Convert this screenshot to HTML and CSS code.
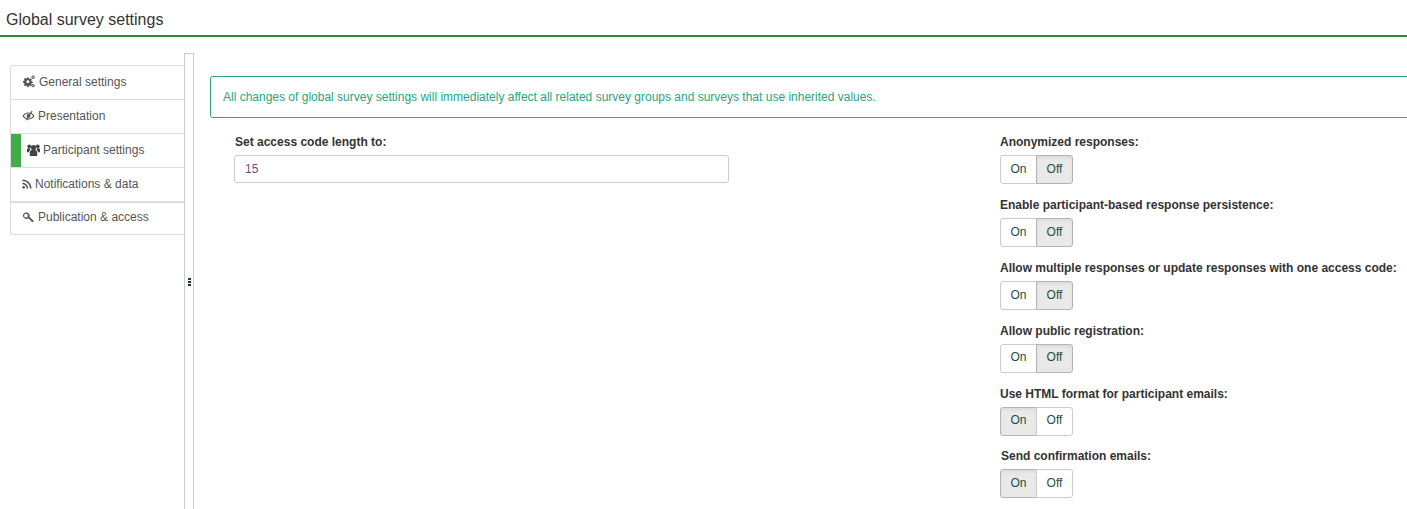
FILE: index.html
```html
<html>

<head>
    <title>Global survey settings</title>
    <link rel="stylesheet" href="styles.css">
</head>

<body>
    <div class="top-bar">Global survey settings</div>

    <div class="page">
        <div class="side-menu">
            <a class="menu-item first">
                <svg class="icon gears" viewBox="0 0 14 14"><path d="M5 2.600h1.600l.3 1.200.9.4 1.100-.6 1.100 1.100-.6 1.100.4.9 1.200.3v1.600l-1.200.3-.4.9.6 1.100-1.100 1.100-1.100-.6-.9.4-.3 1.200H5l-.3-1.200-.9-.4-1.100.6-1.100-1.100.6-1.100-.4-.9L.6 8.100V6.500l1.200-.3.4-.9-.6-1.100 1.100-1.100 1.100.6.9-.4zM5.800 5.700a1.600 1.600 0 1 0 0 3.200 1.600 1.600 0 0 0 0-3.200z" fill-rule="evenodd"/><path d="M11.400.6a1.800 1.800 0 1 0 0 3.600 1.800 1.800 0 0 0 0-3.600zm0 1.100a.7.7 0 1 1 0 1.400.7.7 0 0 1 0-1.400zM11.400 9.600a1.800 1.800 0 1 0 0 3.600 1.800 1.800 0 0 0 0-3.600zm0 1.100a.7.7 0 1 1 0 1.400.7.7 0 0 1 0-1.400z" fill-rule="evenodd"/></svg>
                General settings
            </a>
            <a class="menu-item">
                <svg class="icon" viewBox="0 0 14 14"><path d="M.5 7.500C2 5 4.300 3.800 7 3.800s5 1.200 6.500 3.700C12 10 9.700 11.200 7 11.200S2 10 .5 7.500zm1.500 0c1.200 1.700 3 2.600 5 2.600s3.800-.9 5-2.600c-1.200-1.700-3-2.600-5-2.600s-3.800.9-5 2.600z" fill-rule="evenodd"/><circle cx="7" cy="7.500" r="2"/><path d="M10.300 1.800l1.100.7-6 10-1.100-.7z"/></svg>
                Presentation
            </a>
            <a class="menu-item active">
                <svg class="icon users" viewBox="0 0 13 12"><circle cx="6.500" cy="3.600" r="2.600"/><circle cx="2.300" cy="2.300" r="1.900"/><circle cx="10.700" cy="2.300" r="1.900"/><path d="M2.800 12V8.400c0-1.500.9-2.500 2.200-2.500h3c1.300 0 2.200 1 2.200 2.500V12z"/><path d="M0 8.200V5.800c0-1 .5-1.500 1.500-1.500h1.300c.1.800.4 1.400 1 1.800C2.600 6.500 2 7.200 1.900 8.200zM13 8.200V5.800c0-1-.5-1.500-1.500-1.500h-1.300c-.1.800-.4 1.400-1 1.800 1.200.4 1.800 1.100 1.900 2.100z"/></svg>
                Participant settings
            </a>
            <a class="menu-item">
                <svg class="icon rss" viewBox="0 0 12 12"><circle cx="2" cy="10" r="1.600"/><path d="M.5 4.500c3.900 0 7 3.100 7 7H5.600c0-2.800-2.300-5.100-5.100-5.100z"/><path d="M.5.500c6.100 0 11 4.900 11 11H9.600c0-5-4.100-9.100-9.100-9.100z"/></svg>
                Notifications &amp; data
            </a>
            <a class="menu-item last">
                <svg class="icon" viewBox="0 0 14 14"><path d="M4.500 1.500a3.500 3.500 0 1 0 2 6.400l1.200 1.100 1 .1.100 1.200 1.200.1.200 1.300 2 .3.300-1.600-4.500-4.200a3.500 3.500 0 0 0-3.500-4.700zM4.300 3a2 2 0 1 1 0 4 2 2 0 0 1 0-4z" fill-rule="evenodd"/></svg>
                Publication &amp; access
            </a>
        </div>

        <div class="resize-handle">
            <div class="grip"><span></span><span></span><span></span></div>
        </div>

        <div class="content">
            <div class="notice">All changes of global survey settings will immediately affect all related survey groups and surveys that use inherited values.</div>

            <div class="columns">
                <div class="left-col">
                    <label class="field-label">Set access code length to:</label>
                    <input class="text-input" type="text" value="15">
                </div>

                <div class="right-col">
                    <div class="field">
                        <label class="field-label">Anonymized responses:</label>
                        <div class="toggle"><span class="btn">On</span><span class="btn selected">Off</span></div>
                    </div>
                    <div class="field">
                        <label class="field-label">Enable participant-based response persistence:</label>
                        <div class="toggle"><span class="btn">On</span><span class="btn selected">Off</span></div>
                    </div>
                    <div class="field">
                        <label class="field-label">Allow multiple responses or update responses with one access code:</label>
                        <div class="toggle"><span class="btn">On</span><span class="btn selected">Off</span></div>
                    </div>
                    <div class="field">
                        <label class="field-label">Allow public registration:</label>
                        <div class="toggle"><span class="btn">On</span><span class="btn selected">Off</span></div>
                    </div>
                    <div class="field">
                        <label class="field-label">Use HTML format for participant emails:</label>
                        <div class="toggle"><span class="btn selected">On</span><span class="btn">Off</span></div>
                    </div>
                    <div class="field">
                        <label class="field-label shift">Send confirmation emails:</label>
                        <div class="toggle"><span class="btn selected">On</span><span class="btn">Off</span></div>
                    </div>
                </div>
            </div>
        </div>
    </div>
</body>

</html>
```

FILE: styles.css
```css
html,
body {
    margin: 0;
    height: 509px;
    overflow: hidden;
    background: #fff;
}

body {
    font-family: "Liberation Sans", Arial, sans-serif;
    font-size: 12px;
    color: #333;
}

.top-bar {
    box-sizing: border-box;
    height: 37px;
    padding: 11px 0 0 6px;
    font-size: 16px;
    line-height: 18px;
    color: #333;
    border-bottom: 2px solid #328637;
}

.page {
    display: flex;
    height: 472px;
}

.side-menu {
    width: 174px;
    margin: 28px 0 0 10px;
    flex-shrink: 0;
    align-self: flex-start;
}

.menu-item {
    display: flex;
    align-items: center;
    height: 34px;
    box-sizing: border-box;
    padding: 0 0 2px 11px;
    gap: 3px;
    color: #555;
    background: #fff;
    border: 1px solid #ddd;
    border-top: 0;
    border-right: 0;
}

.menu-item.first {
    height: 35px;
    border-top: 1px solid #ddd;
    border-top-left-radius: 3px;
}

.menu-item.last {
    height: 33px;
    padding-bottom: 3px;
    border-top: 1px solid #ddd;
    border-bottom-left-radius: 3px;
}

.menu-item.active {
    padding-left: 16px;
    box-shadow: inset 10px 0 0 #3fae49;
}

.icon {
    width: 13px;
    height: 13px;
    fill: #555;
    flex-shrink: 0;
}

.icon.gears {
    width: 14px;
}

.icon.users {
    height: 12px;
    fill: #444;
}

.icon.rss {
    width: 10px;
    height: 10px;
}

.resize-handle {
    width: 8px;
    margin-top: 16px;
    flex-shrink: 0;
    display: flex;
    align-items: center;
    justify-content: center;
    height: 456px;
    border: 1px solid #ccc;
    border-bottom: 0;
}

.grip {
    display: flex;
    flex-direction: column;
    gap: 1px;
}

.grip span {
    width: 3px;
    height: 2px;
    background: #1d3b30;
}

.content {
    flex: 1;
    min-width: 0;
    overflow: hidden;
    padding: 39px 0 0 16px;
}

.notice {
    width: 1220px;
    height: 42px;
    box-sizing: border-box;
    padding: 13px 0 0 12px;
    line-height: 14px;
    color: #2aa37f;
    border: 1px solid #2fa583;
    border-radius: 3px;
}

.columns {
    display: flex;
    margin-top: 17.4px;
}

.left-col {
    width: 495px;
    margin-left: 24px;
    flex-shrink: 0;
}

.right-col {
    margin-left: 271px;
    flex-shrink: 0;
}

.field {
    height: 62.8px;
}

.field-label {
    display: block;
    height: 20px;
    line-height: 14px;
    font-weight: bold;
    color: #333;
}

.left-col .field-label {
    padding-left: 1px;
}

.field-label.shift {
    padding-left: 1px;
}

.text-input {
    display: block;
    width: 100%;
    height: 28px;
    box-sizing: border-box;
    padding: 0 10px;
    font-family: inherit;
    font-size: 12px;
    color: #744a7d;
    border: 1px solid #ccc;
    border-radius: 3px;
    outline: none;
}

.toggle {
    display: flex;
    width: 73px;
    height: 29px;
}

.btn {
    display: flex;
    align-items: center;
    justify-content: center;
    width: 37px;
    box-sizing: border-box;
    padding-bottom: 1.8px;
    line-height: 14px;
    color: #1f4e44;
    background: #fff;
    border: 1px solid #ccc;
}

.btn:first-child {
    border-radius: 3px 0 0 3px;
}

.btn:last-child {
    margin-left: -1px;
    border-radius: 0 3px 3px 0;
}

.btn.selected {
    background: #e9e9e9;
    border-color: #b4b4b4;
    box-shadow: inset 0 2px 3px rgba(0, 0, 0, .06);
}
```
